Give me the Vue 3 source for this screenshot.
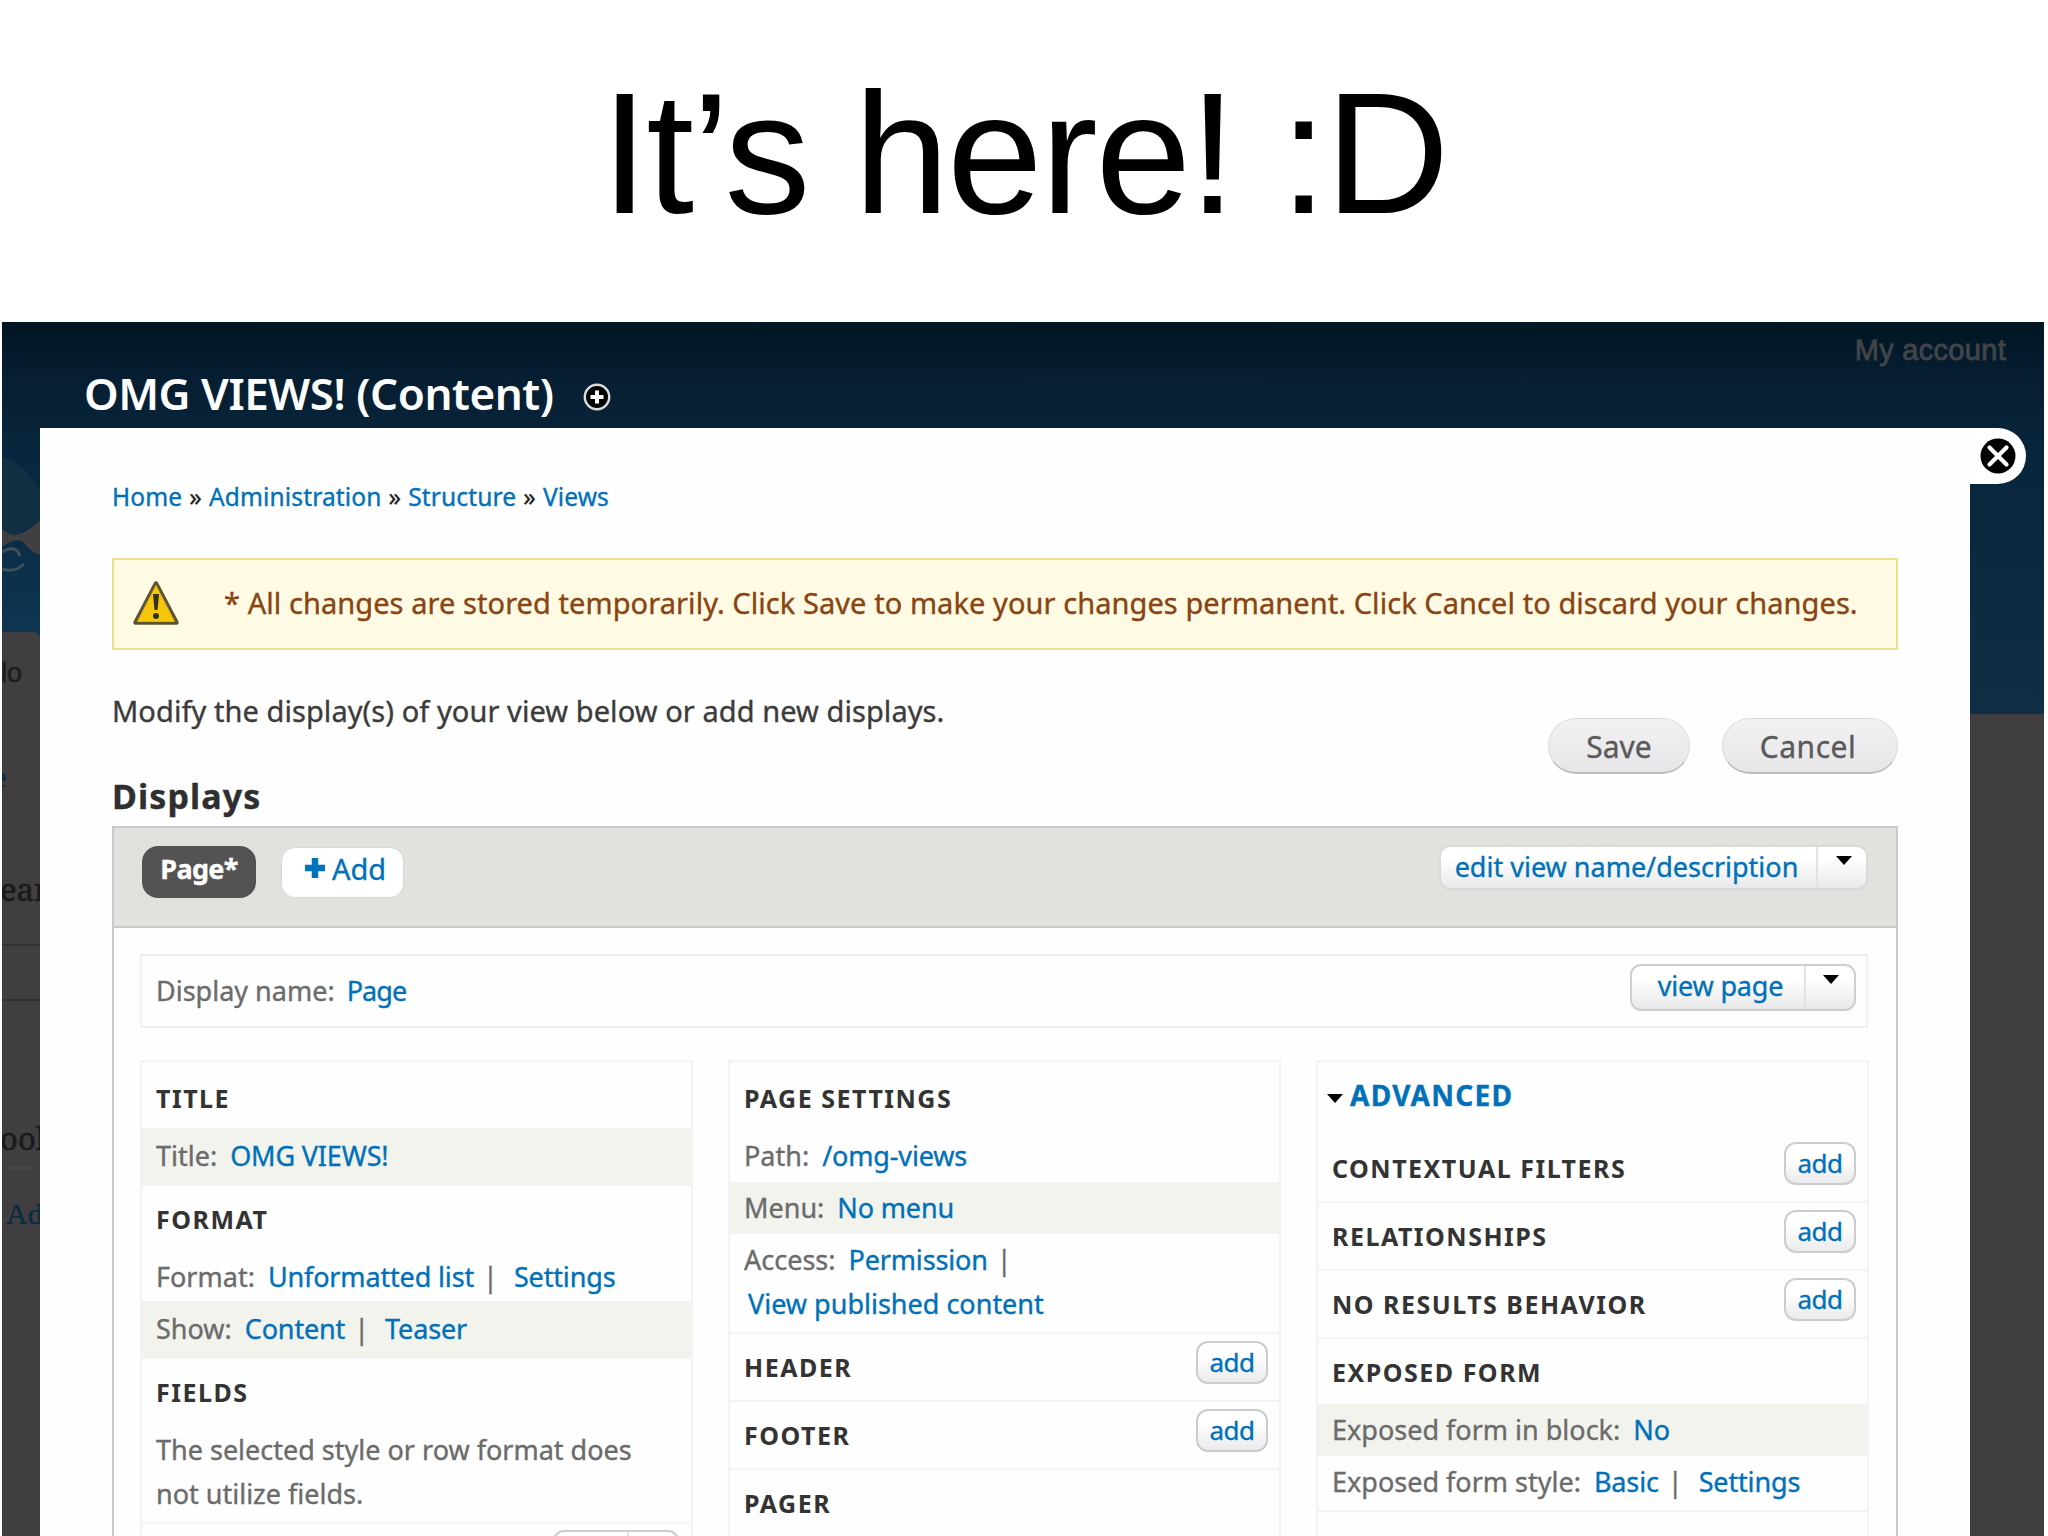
<script setup>
import { ref } from 'vue';

const breadcrumb = ['Home', 'Administration', 'Structure', 'Views'];

const columns = ref([
    {
        sections: [
            { title: 'Title', rows: [{ label: 'Title:', links: ['OMG VIEWS!'], stripe: true }] },
            {
                title: 'Format',
                rows: [
                    { label: 'Format:', links: ['Unformatted list', 'Settings'] },
                    { label: 'Show:', links: ['Content', 'Teaser'], stripe: true }
                ]
            },
            { title: 'Fields', rows: [{ text: 'The selected style or row format does not utilize fields.' }] },
            { split: true }
        ]
    },
    {
        sections: [
            {
                title: 'Page settings',
                rows: [
                    { label: 'Path:', links: ['/omg-views'] },
                    { label: 'Menu:', links: ['No menu'], stripe: true },
                    { label: 'Access:', links: ['Permission', 'View published content'], wrap: true }
                ]
            },
            { title: 'Header', add: true },
            { title: 'Footer', add: true },
            { title: 'Pager' }
        ]
    },
    {
        advanced: true,
        sections: [
            { title: 'Contextual filters', add: true },
            { title: 'Relationships', add: true },
            { title: 'No results behavior', add: true },
            {
                title: 'Exposed form',
                rows: [
                    { label: 'Exposed form in block:', links: ['No'], stripe: true },
                    { label: 'Exposed form style:', links: ['Basic', 'Settings'] }
                ]
            },
            {}
        ]
    }
]);
</script>

<template>
    <div class="slide">
        <h1 class="slide_title">It’s here! :D</h1>
        <div class="site">
            <header class="overlay_head">
                <h2>OMG VIEWS! (Content)</h2>
                <svg class="icon_plus" viewBox="0 0 28 28">
                    <circle cx="14" cy="14" r="12.2" fill="#000" stroke="#dcdcdc" stroke-width="2.4" />
                    <path d="M14 7.5v13M7.5 14h13" stroke="#fff" stroke-width="4" />
                </svg>
                <span class="account">My account</span>
            </header>

            <div class="site_body">
                <svg class="side_left" viewBox="0 0 38 1108">
                    <defs>
                        <linearGradient id="sky" x1="0" y1="0" x2="0" y2="1">
                            <stop offset="0" stop-color="#07243a" />
                            <stop offset="1" stop-color="#0d3652" />
                        </linearGradient>
                    </defs>
                    <rect width="38" height="1108" fill="#403e41" />
                    <path d="M0 0h38v208q-2-4-8-4H0z" fill="url(#sky)" />
                    <path d="M0 29q24 6 38 36v28L12 108 0 104z" fill="#123043" />
                    <path d="M0 101q7 6 14 6 10-2 24-14v34q-8-2-18-14-8-3-20 6z" fill="#403f42" />
                    <path d="M0 124q14-8 18 4M0 141q12 4 22-5" fill="none" stroke="#414f5a" stroke-width="3" />
                    <text x="-1" y="254" class="bg_sans">lo</text>
                    <text x="-9" y="359" class="bg_link">e</text>
                    <text x="-2" y="473" class="bg_serif">ear</text>
                    <path d="M0 517h38M0 572h38" stroke="#323134" stroke-width="2" />
                    <text x="-2" y="722" class="bg_serif">ool</text>
                    <path d="M0 740h30" stroke="#4a494b" stroke-width="1.5" />
                    <text x="4" y="796" class="bg_link">Ad</text>
                </svg>

                <main class="overlay">
                    <nav class="breadcrumb">
                        <template v-for="(item, i) in breadcrumb" :key="item">
                            <span v-if="i" class="sep">»</span>
                            <a>{{ item }}</a>
                        </template>
                    </nav>

                    <div class="warning">
                        <svg class="icon_warning" viewBox="0 0 48 46">
                            <path d="M24 3.5 44.5 42.5H3.5z" fill="#f2c30c" stroke="#5d532c" stroke-width="4.5" stroke-linejoin="round" />
                            <path d="M24 5.5 42.5 41.5H5.5z" fill="#f5c60a" stroke="#e0b020" stroke-width="1" />
                            <path d="M21 14h6l-1.5 16h-3z" fill="#33301c" />
                            <circle cx="24" cy="36" r="3" fill="#33301c" />
                        </svg>
                        <p>* All changes are stored temporarily. Click Save to make your changes permanent. Click Cancel to discard your changes.</p>
                    </div>

                    <div class="intro">
                        <div>
                            <p>Modify the display(s) of your view below or add new displays.</p>
                            <h3>Displays</h3>
                        </div>
                        <div class="actions">
                            <button class="btn_pill btn_save">Save</button>
                            <button class="btn_pill btn_cancel">Cancel</button>
                        </div>
                    </div>

                    <section class="displays">
                        <div class="tabs">
                            <a class="tab tab_active">Page*</a>
                            <a class="tab tab_add">
                                <svg viewBox="0 0 20 20"><path d="M10 0v20M0 10h20" stroke="#0074bd" stroke-width="6.5" /></svg>
                                Add
                            </a>
                            <div class="dropbutton drop_edit">
                                <a>edit view name/description</a>
                                <span class="toggle"><i class="caret"></i></span>
                            </div>
                        </div>

                        <div class="display_name">
                            <span>Display name:</span>
                            <a>Page</a>
                            <div class="dropbutton drop_view">
                                <a>view page</a>
                                <span class="toggle"><i class="caret"></i></span>
                            </div>
                        </div>

                        <div class="columns">
                            <div v-for="(column, c) in columns" :key="c" class="column" :class="{ column_advanced: column.advanced }">
                                <div v-if="column.advanced" class="advanced"><i class="caret"></i><a>Advanced</a></div>
                                <div v-for="(section, s) in column.sections" :key="s" class="section">
                                    <div v-if="section.title" class="section_head">
                                        <h4>{{ section.title }}</h4>
                                        <a v-if="section.add" class="btn_add">add</a>
                                    </div>
                                    <div v-if="section.split" class="dropbutton drop_cut">
                                        <a>add</a>
                                        <span class="toggle"><i class="caret"></i></span>
                                    </div>
                                    <div v-for="(row, r) in section.rows" :key="r" class="row" :class="{ stripe: row.stripe }">
                                        <span v-if="row.text" class="row_text">{{ row.text }}</span>
                                        <template v-else>
                                            <span>{{ row.label }}</span>
                                            <template v-for="(link, l) in row.links" :key="link">
                                                <span v-if="l" class="pipe">|</span>
                                                <a :class="{ second: l, wrapped: l && row.wrap }">{{ link }}</a>
                                            </template>
                                        </template>
                                    </div>
                                </div>
                            </div>
                        </div>
                    </section>
                </main>

                <aside class="side_right">
                    <div class="side_sky"></div>
                    <div class="close_tab">
                        <svg viewBox="0 0 36 36">
                            <circle cx="18" cy="18" r="17.5" fill="#000" />
                            <path d="M9.5 9.5l17 17M26.5 9.5l-17 17" stroke="#fff" stroke-width="4.2" stroke-linecap="round" />
                        </svg>
                    </div>
                </aside>
            </div>
        </div>
    </div>
</template>

<style>
    body {
        background: #fff;
        overflow: hidden;
    }
</style>

<style scoped>
    .slide {
        width: 2048px;
        height: 1536px;
        overflow: hidden;
        display: flex;
        flex-direction: column;
        background: #fff;
        font-family: "Noto Sans", "Open Sans", sans-serif;
        font-size: 27px;
        color: #3b3b3b;
    }

    h1, h2, h3, h4, p {
        margin: 0;
    }

    a {
        color: #0071b8;
        text-decoration: none;
    }

    .slide_title {
        height: 322px;
        flex: none;
        line-height: 307px;
        text-align: center;
        font-family: "Liberation Sans", Arial, sans-serif;
        font-size: 172px;
        font-weight: 400;
        letter-spacing: -2.3px;
        color: #000;
    }

    .site {
        flex: 1;
        margin: 0 4px 0 2px;
        min-height: 0;
        display: flex;
        flex-direction: column;
    }

    .overlay_head {
        height: 106px;
        flex: none;
        display: flex;
        align-items: flex-start;
        background: linear-gradient(#001622, #061d31 45%, #082338);
        padding-right: 38px;
    }

    .overlay_head h2 {
        width: 472px;
        margin-left: 82px;
        font-size: 44px;
        line-height: 60px;
        padding-top: 41px;
        font-weight: 600;
        letter-spacing: -0.45px;
        white-space: nowrap;
        color: #fff;
    }

    .icon_plus {
        width: 28px;
        height: 28px;
        margin: 61px 0 0 27px;
    }

    .account {
        margin-left: auto;
        padding-top: 10px;
        line-height: 36px;
        font-family: "Liberation Sans", Arial, sans-serif;
        font-size: 29px;
        letter-spacing: 0.3px;
        color: #424548;
        -webkit-text-stroke: 0.8px #424548;
    }

    .site_body {
        flex: 1;
        min-height: 0;
        display: flex;
        background: #403e41;
    }

    .side_left {
        width: 38px;
        height: 1108px;
        flex: none;
    }

    .bg_sans {
        font: 27px "Liberation Sans", sans-serif;
        fill: #1c1b1e;
        stroke: #1c1b1e;
        stroke-width: 0.6px;
    }

    .bg_serif {
        font: 31px "Noto Serif", "Liberation Serif", serif;
        fill: #1a1a1c;
        stroke: #1a1a1c;
        stroke-width: 0.6px;
    }

    .bg_link {
        font: 30px "Liberation Serif", serif;
        fill: #0b2b40;
        stroke: #0b2b40;
        stroke-width: 0.5px;
    }

    .overlay {
        width: 1786px;
        flex: none;
        padding: 0 72px;
        background: #fefefe;
        -webkit-text-stroke: 0.35px;
    }

    .side_right {
        flex: 1;
        position: relative;
    }

    .side_sky {
        height: 286px;
        background: linear-gradient(#07243a, #102f44);
    }

    .close_tab {
        position: absolute;
        left: 0;
        top: 0;
        width: 56px;
        height: 56px;
        border-radius: 0 28px 28px 0;
        background: #fff;
    }

    .close_tab svg {
        display: block;
        width: 36px;
        height: 36px;
        margin: 10px 0 0 10px;
    }

    .breadcrumb {
        height: 130px;
        padding-top: 49px;
        box-sizing: border-box;
        display: flex;
        gap: 7px;
        font-size: 24.5px;
        letter-spacing: 0.15px;
        line-height: 40px;
    }

    .sep {
        color: #222;
    }

    .warning {
        height: 92px;
        box-sizing: border-box;
        border: 2px solid #eee08a;
        background: #fffae4;
        display: flex;
        align-items: center;
        padding-left: 18px;
    }

    .icon_warning {
        width: 48px;
        height: 46px;
        flex: none;
        margin-bottom: 3px;
    }

    .warning p {
        margin: 0 0 2px 44px;
        font-size: 29px;
        line-height: 44px;
        letter-spacing: 0.07px;
        white-space: nowrap;
        color: #884411;
    }

    .intro {
        height: 176px;
        display: flex;
        justify-content: space-between;
    }

    .intro p {
        padding-top: 38px;
        font-size: 29px;
        line-height: 46px;
        letter-spacing: 0.07px;
        white-space: nowrap;
    }

    .intro h3 {
        padding-top: 37px;
        font-size: 34px;
        line-height: 50px;
        letter-spacing: 1.1px;
        color: #2f2f2f;
    }

    .actions {
        display: flex;
        gap: 32px;
        padding-top: 68px;
    }

    .btn_pill {
        height: 56px;
        padding: 2px 0 0;
        border: 1px solid #dcdadd;
        border-bottom: 2px solid #bdbbbe;
        border-radius: 28px;
        background: linear-gradient(#f3f1f4, #e6e5e7);
        font-family: inherit;
        font-size: 30px;
        color: #5a5a5a;
    }

    .btn_save {
        width: 142px;
    }

    .btn_cancel {
        width: 176px;
        padding-right: 4px;
        letter-spacing: 0.5px;
    }

    .displays {
        height: 720px;
        border: 2px solid #cbc9cb;
        box-sizing: border-box;
    }

    .tabs {
        height: 100px;
        border-bottom: 2px solid #c9c8c8;
        background: #e1e1dd;
        display: flex;
        align-items: flex-start;
        padding: 17px 28px 0 28px;
    }

    .tabs, .display_name {
        box-sizing: border-box;
    }

    .tab {
        box-sizing: border-box;
        font-size: 29px;
    }

    .tab_active {
        width: 114px;
        height: 52px;
        margin-top: 1px;
        border-radius: 16px;
        background: #545252;
        color: #fff;
        font-size: 27px;
        font-weight: 700;
        letter-spacing: -0.7px;
        line-height: 46px;
        text-align: center;
    }

    .tab_add {
        width: 123px;
        height: 51px;
        margin: 2px 0 0 25px;
        border: 1px solid #d8d8d6;
        border-radius: 14px;
        background: #fff;
        line-height: 41px;
        display: flex;
        padding-left: 23px;
        gap: 7px;
    }

    .tab_add svg {
        width: 20px;
        height: 20px;
        margin-top: 10px;
    }

    .dropbutton {
        box-sizing: border-box;
        margin-left: auto;
        display: flex;
        border: 2px solid #cfcdcf;
        border-radius: 11px;
        background: linear-gradient(#fff 30%, #e9e8ea);
    }

    .dropbutton a {
        flex: 1;
        text-align: center;
        white-space: nowrap;
    }

    .toggle {
        width: 48px;
        border-left: 2px solid #e3e2e4;
        display: flex;
        justify-content: center;
    }

    .caret {
        width: 0;
        height: 0;
        border: 8px solid transparent;
        border-top: 9px solid #000;
        border-bottom: 0;
    }

    .toggle .caret {
        margin: 9px 0 0 4px;
    }

    .drop_edit {
        width: 429px;
        height: 45px;
        border-color: #dad9d9;
        line-height: 39px;
    }

    .drop_edit a {
        padding-right: 4px;
    }

    .display_name {
        height: 74px;
        margin: 26px 28px 0 26px;
        border: 2px solid #f2f0f3;
        display: flex;
        align-items: flex-start;
        padding: 7px 10px 0 14px;
        line-height: 55px;
        color: #6b6b6b;
    }

    .display_name > a {
        margin-left: 12px;
        letter-spacing: -0.9px;
    }

    .drop_view {
        width: 226px;
        height: 47px;
        margin-top: 1px;
        line-height: 40px;
    }

    .drop_view a {
        padding-left: 5px;
        letter-spacing: -0.2px;
    }

    .drop_view .caret {
        margin-left: 1px;
    }

    .columns {
        margin: 32px 27px 0 26px;
        display: grid;
        grid-template-columns: repeat(3, 553px);
        justify-content: space-between;
    }

    .column {
        height: 500px;
        box-sizing: border-box;
        border: 2px solid #f4f2f5;
        padding-top: 1px;
    }

    .column_advanced {
        padding-top: 0;
    }

    .advanced {
        height: 71px;
        display: flex;
        gap: 7px;
        padding-left: 9px;
        font-size: 28px;
        font-weight: 700;
        line-height: 66px;
        letter-spacing: 1.3px;
        text-transform: uppercase;
    }

    .advanced .caret {
        margin-top: 32px;
    }

    .section {
        border-top: 2px solid #f4f2f5;
        padding-bottom: 1px;
    }

    .column > .section:first-child,
    .advanced + .section {
        border-top-color: transparent;
    }

    .section_head {
        height: 65px;
        display: flex;
        justify-content: space-between;
        padding: 0 11px 0 14px;
    }

    .section_head h4 {
        font-size: 25px;
        line-height: 67px;
        font-weight: 700;
        letter-spacing: 1.5px;
        text-transform: uppercase;
        color: #333;
        -webkit-text-stroke: 0;
    }

    .btn_add {
        width: 72px;
        height: 43px;
        margin-top: 7px;
        box-sizing: border-box;
        border: 2px solid #cdcbce;
        border-radius: 12px;
        background: linear-gradient(#fff 35%, #ebeaec);
        text-align: center;
        font-size: 26px;
        letter-spacing: -0.6px;
        line-height: 38px;
    }

    .row {
        padding: 4px 14px;
        line-height: 44px;
        color: #6b6b6b;
    }

    .row:last-child {
        padding-bottom: 5px;
    }

    .row_text {
        display: block;
        width: 500px;
    }

    .row a {
        margin-left: 13px;
        letter-spacing: -0.15px;
        white-space: nowrap;
    }

    .pipe {
        margin-left: 9px;
    }

    .row a.second {
        margin-left: 16px;
    }

    .row a.wrapped {
        display: block;
        margin-left: 4px;
        letter-spacing: 0;
    }

    .stripe {
        background: #f3f3ee;
    }

    .stripe:last-child {
        box-shadow: 0 -2px #f3f3ee, 0 1px #f3f3ee;
    }

    .drop_cut {
        width: 126px;
        height: 46px;
        margin: 6px 12px 0 auto;
        line-height: 40px;
    }
</style>
